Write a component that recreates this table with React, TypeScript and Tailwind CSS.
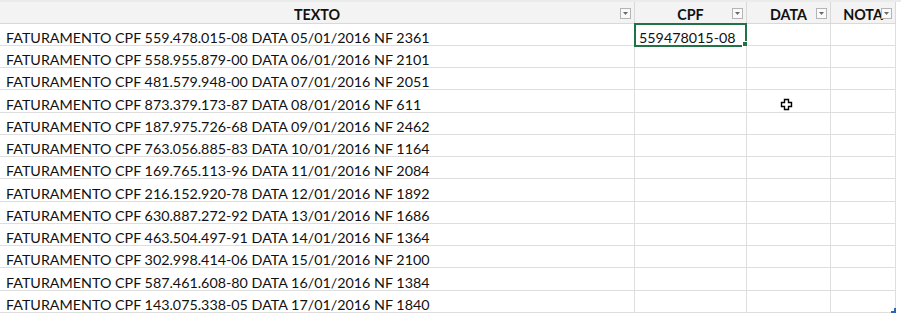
import React from 'react';

const rows = [
  'FATURAMENTO CPF 559.478.015-08 DATA 05/01/2016 NF 2361',
  'FATURAMENTO CPF 558.955.879-00 DATA 06/01/2016 NF 2101',
  'FATURAMENTO CPF 481.579.948-00 DATA 07/01/2016 NF 2051',
  'FATURAMENTO CPF 873.379.173-87 DATA 08/01/2016 NF 611',
  'FATURAMENTO CPF 187.975.726-68 DATA 09/01/2016 NF 2462',
  'FATURAMENTO CPF 763.056.885-83 DATA 10/01/2016 NF 1164',
  'FATURAMENTO CPF 169.765.113-96 DATA 11/01/2016 NF 2084',
  'FATURAMENTO CPF 216.152.920-78 DATA 12/01/2016 NF 1892',
  'FATURAMENTO CPF 630.887.272-92 DATA 13/01/2016 NF 1686',
  'FATURAMENTO CPF 463.504.497-91 DATA 14/01/2016 NF 1364',
  'FATURAMENTO CPF 302.998.414-06 DATA 15/01/2016 NF 2100',
  'FATURAMENTO CPF 587.461.608-80 DATA 16/01/2016 NF 1384',
  'FATURAMENTO CPF 143.075.338-05 DATA 17/01/2016 NF 1840',
];

const FilterButton = () => (
  <span className="absolute right-[3px] top-[6px] w-[11px] h-[11px] border border-[#b4b4b4] bg-[#fafafa] flex items-center justify-center">
    <svg width="5" height="3" viewBox="0 0 5 3">
      <path d="M0 0h5L2.5 3z" fill="#6b6b6b" />
    </svg>
  </span>
);

const HeaderCell = ({ label }: { label: string }) => (
  <div className="relative flex items-end justify-center pb-[1px] border-r border-b border-[#d9d9d9] font-bold text-[#111]">
    {label}
    <FilterButton />
  </div>
);

const App: React.FC = () => {
  return (
    <div
      className="relative w-[901px] h-[320px] bg-white overflow-hidden text-[14.3px] leading-none text-[#111]"
      style={{ fontFamily: 'Lato, "Liberation Sans", sans-serif' }}
    >
      <div className="h-[2px] bg-[#ebebeb]" />
      <div className="grid grid-cols-[635px_112px_84px_65px] w-[896px]">
        <div className="h-[22px] bg-[#f3f3f3] col-span-4 grid grid-cols-subgrid">
          <HeaderCell label="TEXTO" />
          <HeaderCell label="CPF" />
          <HeaderCell label="DATA" />
          <HeaderCell label="NOTA" />
        </div>
        {rows.map((text, i) => (
          <div
            key={text}
            className={`col-span-4 grid grid-cols-subgrid ${i % 4 === 3 ? 'h-[23px]' : 'h-[22px]'}`}
          >
            <div className="flex items-end pl-[6px] pb-0 border-r border-b border-[#dedede] whitespace-nowrap">
              {text}
            </div>
            <div className="relative flex items-end pl-[4px] pb-0 border-r border-b border-[#dedede]">
              {i === 0 && (
                <>
                  <span className="absolute -left-px -top-px w-[113px] h-[24px] border-2 border-[#217346]" />
                  <span className="absolute -right-[2px] -bottom-[2px] w-[4px] h-[4px] bg-[#217346] border border-white box-content" />
                  <span className="relative">559478015-08</span>
                </>
              )}
            </div>
            <div className="border-r border-b border-[#dedede]" />
            <div className="border-r border-b border-[#dedede]" />
          </div>
        ))}
      </div>

      {/* table resize handle */}
      <svg className="absolute left-[891px] top-[308px]" width="5" height="5" viewBox="0 0 5 5">
        <path d="M3 0h2v5H0V3h3z" fill="#2e64b4" />
      </svg>

      {/* mouse cursor */}
      <svg className="absolute left-[780px] top-[98px]" width="13" height="13" viewBox="0 0 13 13">
        <path
          d="M4.5 1.5h4v3h3v4h-3v3h-4v-3h-3v-4h3z"
          fill="#ffffff"
          stroke="#000000"
          strokeWidth="1.4"
        />
      </svg>
    </div>
  );
};

export default App;
